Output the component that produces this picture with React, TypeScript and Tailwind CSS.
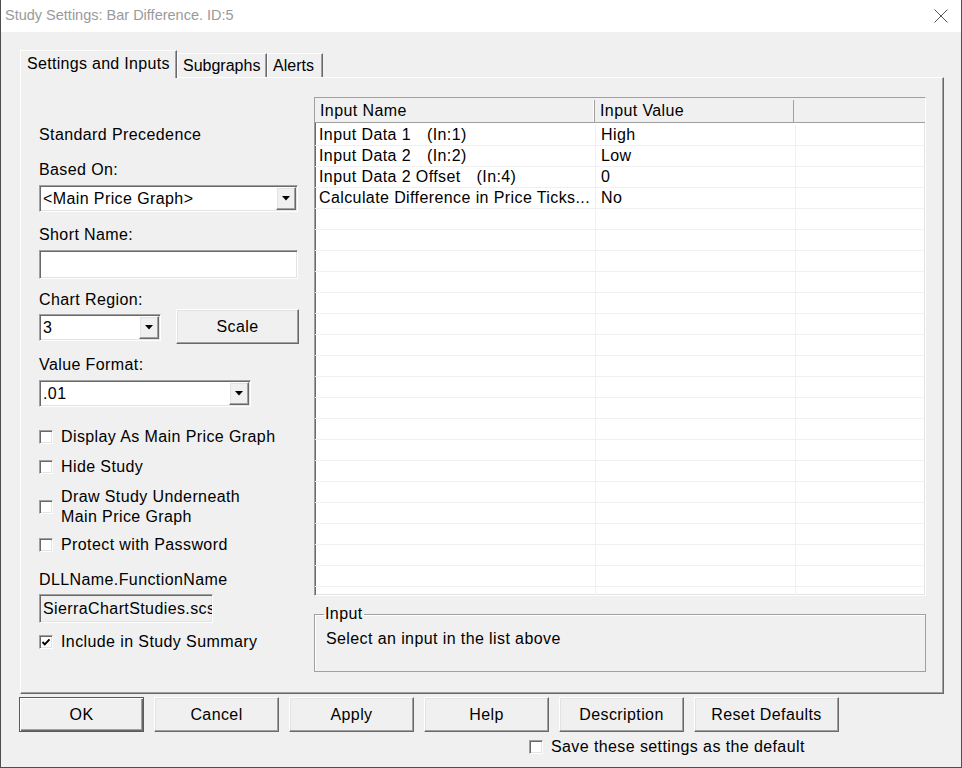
import React from "react";

const sunken =
  "border border-t-[#a0a0a0] border-l-[#a0a0a0] border-r-white border-b-white shadow-[inset_1px_1px_0_#696969,inset_-1px_-1px_0_#e3e3e3]";
const raised =
  "border border-t-white border-l-white border-r-[#696969] border-b-[#696969] shadow-[inset_-1px_-1px_0_#a0a0a0,inset_1px_1px_0_#e3e3e3]";

type Row = {
  name: string;
  tag?: string;
  value: string;
};

const rows: Row[] = [
  { name: "Input Data 1", tag: "(In:1)", value: "High" },
  { name: "Input Data 2", tag: "(In:2)", value: "Low" },
  { name: "Input Data 2 Offset", tag: "(In:4)", value: "0" },
  { name: "Calculate Difference in Price Ticks...", value: "No" },
];

const CheckBox = ({ checked = false }: { checked?: boolean }) => (
  <span className={`flex h-[14px] w-[14px] shrink-0 items-center justify-center bg-white ${sunken}`}>
    {checked && (
      <svg width="10" height="10" viewBox="0 0 10 10">
        <path d="M1.5 5 L3.8 7.3 L8.5 2.3" fill="none" stroke="#000" strokeWidth="1.9" />
      </svg>
    )}
  </span>
);

const ComboBox = ({ value, className }: { value: string; className: string }) => (
  <div className={`flex h-[27px] items-stretch bg-white ${sunken} ${className}`}>
    <span className="flex flex-1 items-center overflow-hidden whitespace-nowrap pl-[3px]">{value}</span>
    <span className={`my-[1px] mr-[1px] flex w-[20px] items-center justify-center bg-[#f0f0f0] ${raised}`}>
      <svg width="8" height="5" viewBox="0 0 8 5">
        <polygon points="0,0 8,0 4,4.5" fill="#000" />
      </svg>
    </span>
  </div>
);

const Label = ({ children, className = "" }: { children: React.ReactNode; className?: string }) => (
  <div className={`h-[18px] leading-[18px] whitespace-nowrap ${className}`}>{children}</div>
);

const CheckRow = ({ children, checked, className = "" }: { children: React.ReactNode; checked?: boolean; className?: string }) => (
  <div className={`flex items-center gap-[8px] ${className}`}>
    <CheckBox checked={checked} />
    <span className="leading-[20px]">{children}</span>
  </div>
);

const Button = ({ children, isDefault, className = "w-[125px]" }: { children: React.ReactNode; isDefault?: boolean; className?: string }) => (
  <button
    className={`flex h-[35px] items-center justify-center bg-[#f0f0f0] ${className} ${
      isDefault
        ? "border border-[#5a5a5a] shadow-[inset_1px_1px_0_#ffffff,inset_-1px_-1px_0_#696969,inset_-2px_-2px_0_#a0a0a0]"
        : raised
    }`}
  >
    {children}
  </button>
);

export default function App() {
  const emptyRows = Array.from({ length: 20 });

  return (
    <div className="flex h-[768px] w-[962px] flex-col border-x border-b border-[#4f4f4f] bg-[#f0f0f0] font-['Liberation_Sans',Arial,sans-serif] text-[16px] tracking-[0.4px] text-black">
      {/* title bar */}
      <div className="flex h-[32px] shrink-0 items-center justify-between bg-white pl-[4px] pr-[13px]">
        <span className="text-[14.5px] tracking-normal text-[#9a9a9a]">Study Settings: Bar Difference. ID:5</span>
        <svg width="14" height="14" viewBox="0 0 14 14">
          <path d="M0.5 0.5 L13.5 13.5 M13.5 0.5 L0.5 13.5" stroke="#555" strokeWidth="1" />
        </svg>
      </div>

      <div className="flex flex-1 flex-col pl-[19px] pt-[18px]">
        {/* tabs */}
        <div className="flex h-[27px] items-end">
          <div className="relative z-10 -mb-px h-[28px] w-[157px] border-l border-t border-r border-l-white border-t-white border-r-[#696969] bg-[#f0f0f0] pl-[6px] pt-[4px] leading-[18px] tracking-[0.3px] shadow-[inset_-1px_0_0_#a0a0a0]">
            Settings and Inputs
          </div>
          <div className="h-[24px] w-[90px] border-l border-t border-r border-l-white border-t-white border-r-[#696969] pl-[5px] pt-[3px] leading-[18px] tracking-normal shadow-[inset_-1px_0_0_#a0a0a0]">
            Subgraphs
          </div>
          <div className="h-[24px] w-[56px] border-l border-t border-r border-l-white border-t-white border-r-[#696969] pl-[5px] pt-[3px] leading-[18px] tracking-normal shadow-[inset_-1px_0_0_#a0a0a0]">
            Alerts
          </div>
        </div>

        {/* tab panel */}
        <div className="flex h-[617px] w-[924px] border border-l-white border-t-white border-r-[#696969] border-b-[#696969] pl-[18px] pt-[19px] shadow-[inset_-1px_-1px_0_#a0a0a0]">
          {/* left column */}
          <div className="flex w-[260px] flex-col">
            <Label className="mt-[29px]">Standard Precedence</Label>
            <Label className="mt-[17px]">Based On:</Label>
            <ComboBox value="<Main Price Graph>" className="mt-[6px] w-[259px]" />
            <Label className="mt-[14px]">Short Name:</Label>
            <div className={`mt-[6px] h-[29px] w-[259px] bg-white ${sunken}`} />
            <Label className="mt-[12px]">Chart Region:</Label>
            <div className="flex h-[35px] items-start">
              <ComboBox value="3" className="mt-[5px] w-[122px]" />
              <Button className="ml-[15px] w-[123px]">Scale</Button>
            </div>
            <Label className="mt-[12px]">Value Format:</Label>
            <ComboBox value=".01" className="mt-[6px] w-[212px]" />
            <CheckRow className="mt-[20px]">Display As Main Price Graph</CheckRow>
            <CheckRow className="mt-[10px]">Hide Study</CheckRow>
            <CheckRow className="mt-[10px]">
              Draw Study Underneath
              <br />
              Main Price Graph
            </CheckRow>
            <CheckRow className="mt-[8px]">Protect with Password</CheckRow>
            <Label className="mt-[16px]">DLLName.FunctionName</Label>
            <div className={`mt-[5px] flex h-[29px] w-[174px] items-center overflow-hidden whitespace-nowrap bg-[#f0f0f0] pl-[3px] ${sunken}`}>
              SierraChartStudies.scsf_BarDifference
            </div>
            <CheckRow checked className="mt-[9px]">Include in Study Summary</CheckRow>
          </div>

          {/* right column */}
          <div className="ml-[15px] flex w-[612px] flex-col">
            <div className={`flex h-[499px] flex-col overflow-hidden bg-white ${sunken}`}>
              <div className="flex h-[25px] shrink-0 border-b border-[#a0a0a0] bg-[#f0f0f0] pt-[2px]">
                <div className="flex w-[280px] items-center border-r border-[#a0a0a0] pl-[5px] shadow-[inset_-1px_0_0_#ffffff]">Input Name</div>
                <div className="flex w-[199px] items-center border-r border-[#a0a0a0] pl-[5px]">Input Value</div>
                <div className="w-[129px]" />
              </div>
              <div className="flex flex-col pt-[2px]">
                {rows.map((r) => (
                  <div key={r.name} className="flex h-[21px] shrink-0 border-b border-[#f0f0f0]">
                    <div className="flex w-[281px] items-center overflow-hidden whitespace-nowrap border-r border-[#f0f0f0] pl-[4px]">
                      {r.name}
                      {r.tag && <span className="ml-[16px]">{r.tag}</span>}
                    </div>
                    <div className="flex w-[200px] items-center border-r border-[#f0f0f0] pl-[5px]">{r.value}</div>
                    <div className="flex-1" />
                  </div>
                ))}
                {emptyRows.map((_, i) => (
                  <div key={i} className="flex h-[21px] shrink-0 border-b border-[#f0f0f0]">
                    <div className="w-[281px] border-r border-[#f0f0f0]" />
                    <div className="w-[200px] border-r border-[#f0f0f0]" />
                    <div className="flex-1" />
                  </div>
                ))}
              </div>
            </div>

            <fieldset className="mt-[9px] border border-[#a0a0a0] shadow-[inset_1px_1px_0_#ffffff]">
              <legend className="ml-[9px] px-[1px] leading-[18px]">Input</legend>
              <div className="pb-[23px] pl-[11px] pt-[7px] leading-[18px]">Select an input in the list above</div>
            </fieldset>
          </div>
        </div>

        {/* buttons */}
        <div className="-ml-px mt-[3px] flex gap-[10px]">
          <Button isDefault>OK</Button>
          <Button>Cancel</Button>
          <Button>Apply</Button>
          <Button>Help</Button>
          <Button>Description</Button>
          <Button className="w-[145px]">Reset Defaults</Button>
        </div>
        <div className="ml-[509px] mt-[6px] flex items-center gap-[8px]">
          <CheckBox />
          <span className="leading-[18px]">Save these settings as the default</span>
        </div>
      </div>
    </div>
  );
}
